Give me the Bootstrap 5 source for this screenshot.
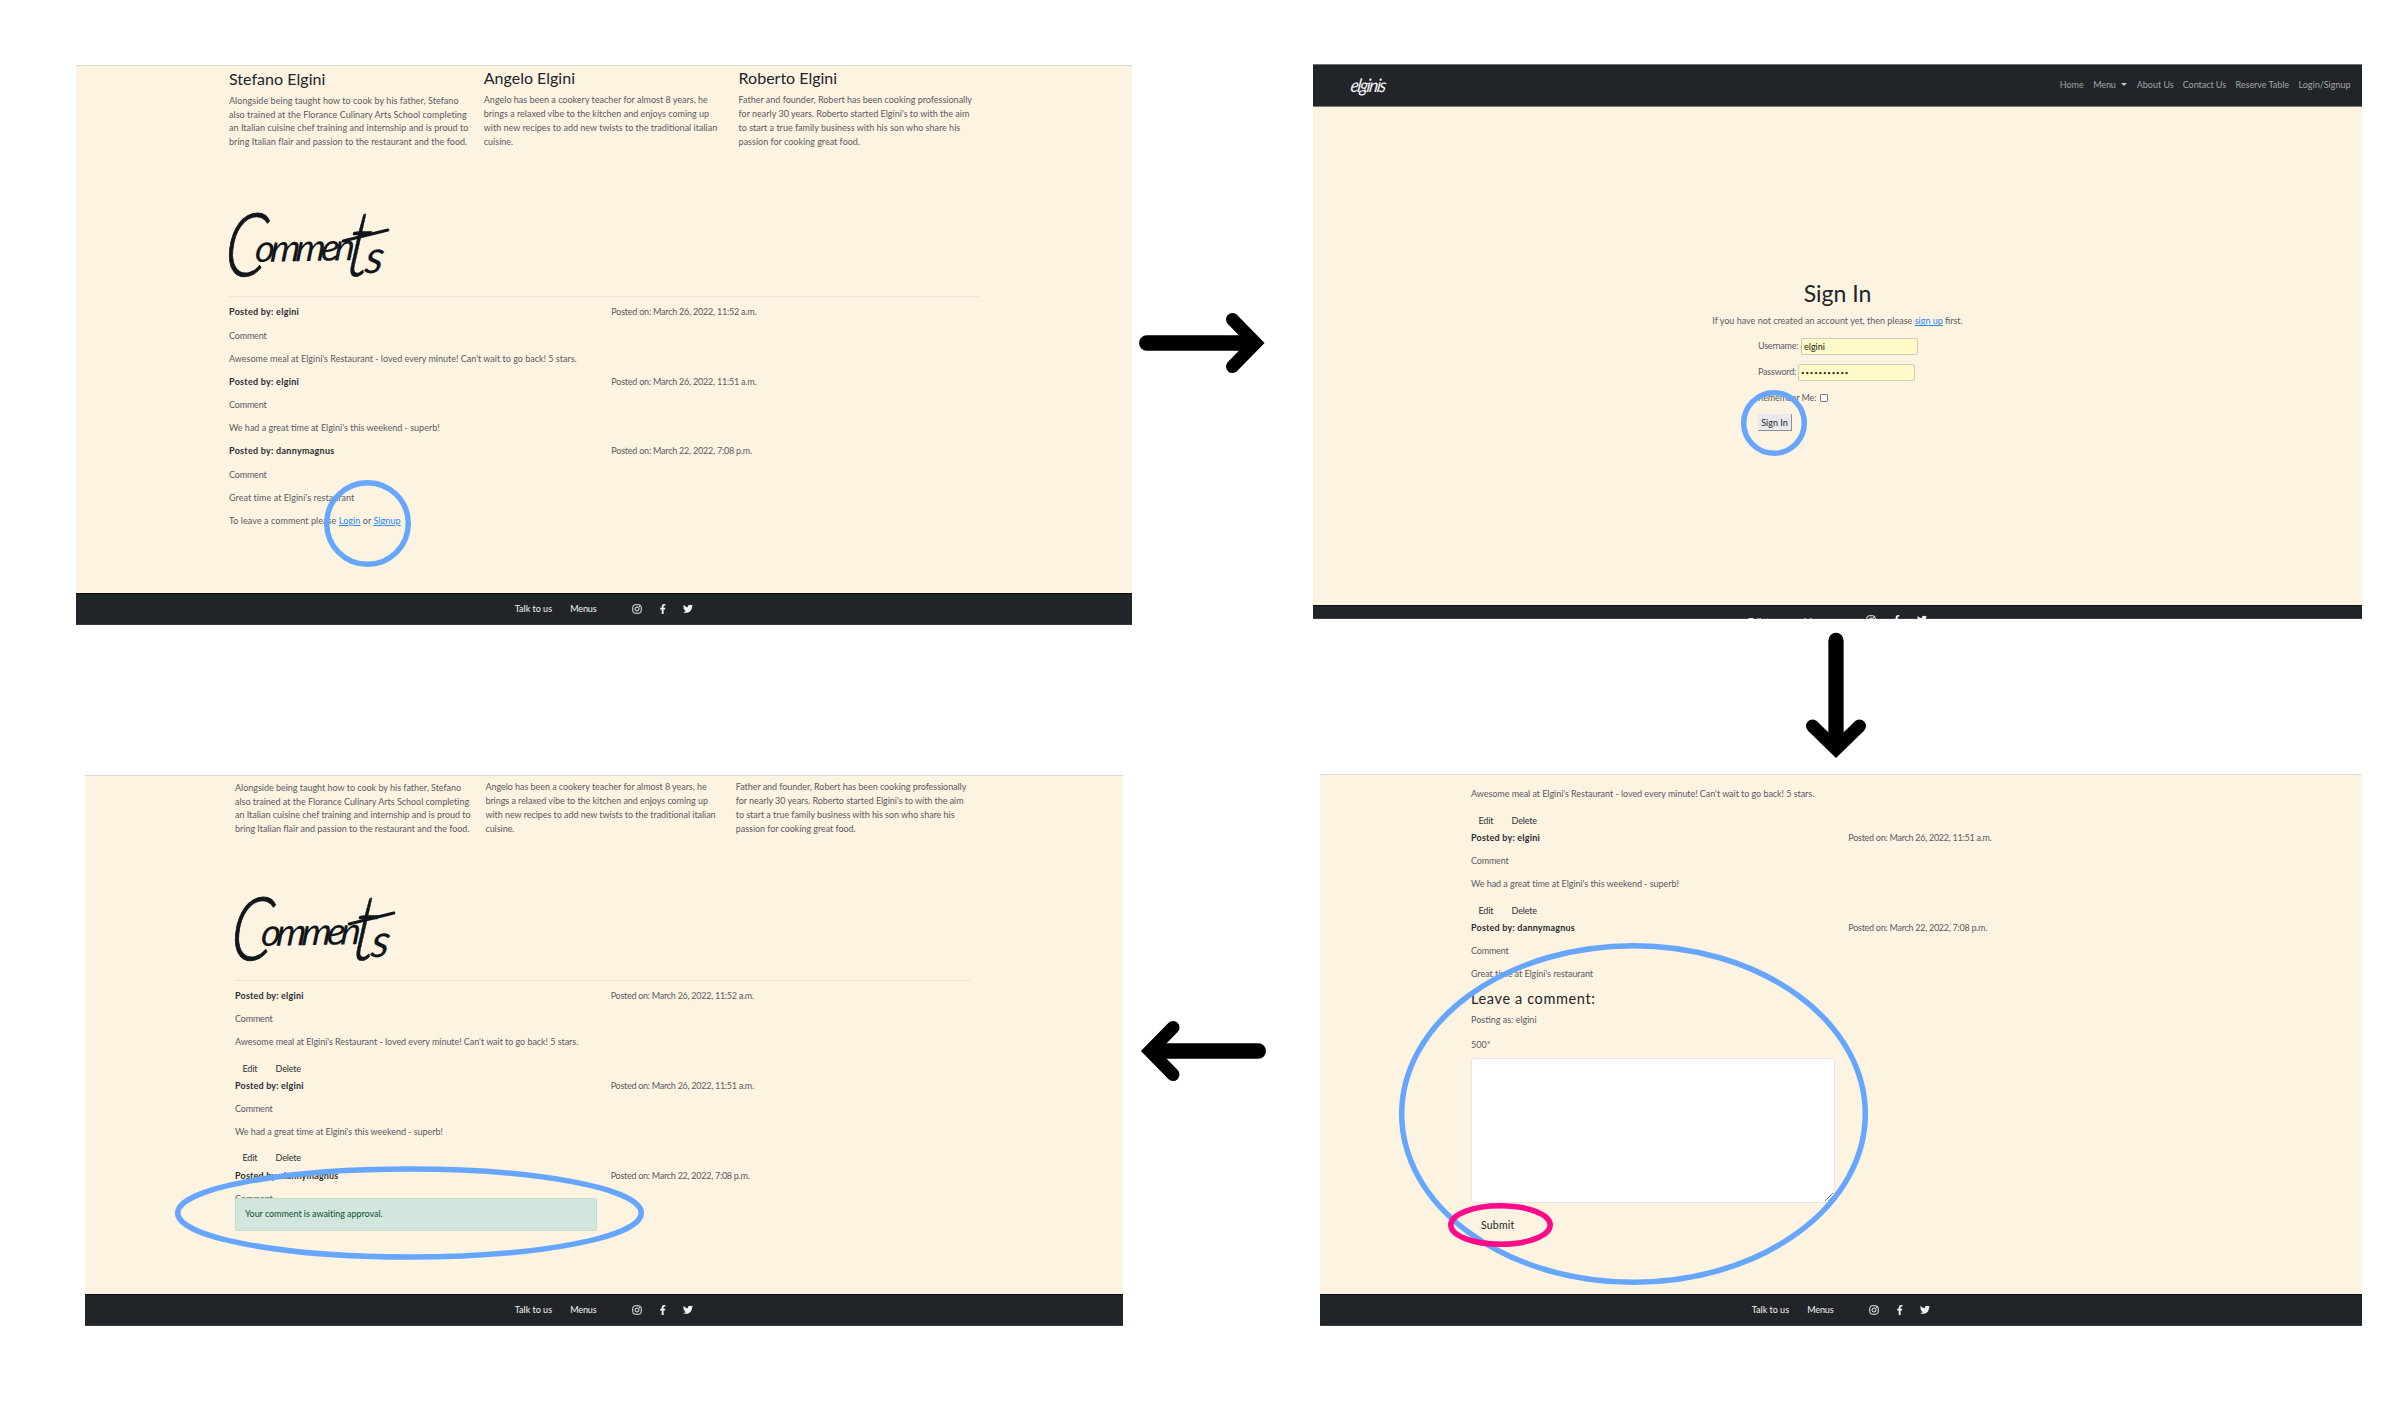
<!DOCTYPE html>
<html lang="en">
<head>
<meta charset="utf-8">
<title>Elgini's - comment flow</title>
<link href="https://cdn.jsdelivr.net/npm/bootstrap@5.3.0/dist/css/bootstrap.min.css" rel="stylesheet">
<style>
body{width:2400px;height:1409px;overflow:hidden;background:#fff;font-family:Lato,"Liberation Sans",sans-serif;font-size:9px;line-height:var(--lh);color:#5a5c5f;--lh:13.9px;--gap:9.25px}
.stage{width:2400px;height:1409px}
.panel{background:#fcf3e1;overflow:hidden}
.panel.cut{border-top:1px solid #dadbd6}
.panel p{margin:0 0 var(--gap)}
.panel b{font-weight:700;color:#2b2e32}
.p1{width:1056px;height:560px;margin:1.4px 0 0 76px}
.p2{width:1049px;height:555px}
.p3{width:1038px;height:550.6px;margin:1.2px 0 0 85px;--lh:13.65px;--gap:9.1px}
.p4{width:1042px;height:552px;--lh:13.65px;--gap:9.15px}
.row-top{height:625px;padding-top:64px}
.row-mid{height:149px;padding-left:1801px;padding-top:4px}
.arrow{width:137px;height:70px;flex:none}
.arrow-v{width:70px;height:137px}
.in1{margin-left:153px;width:750px;padding-top:2px}
.in3{margin-left:150px;width:736px;padding-top:3.8px}
.in4{margin-left:151px;width:600px;padding-top:12.2px}
.chef{width:254.8px;flex:none;white-space:nowrap;letter-spacing:0}
.chef h5{font-size:16px;line-height:19.2px;margin:0 0 5.4px;font-weight:400;color:#212529}
.p3 .chef{width:250.4px;letter-spacing:-.05px}
.first{padding-top:.7px;letter-spacing:.04px}
.p3 .first{letter-spacing:-.02px}
/* hand-lettered section heading */
.script-h{height:147px;color:#11161b;font-style:italic;font-weight:400;font-size:38px;line-height:38px;margin:0 0 0 -7px;padding-bottom:10px}
.p3 .script-h{height:143.5px}
.script-h span{display:inline-block;transform-origin:0 100%}
.script-h .s-c{font-size:88px;line-height:88px;font-weight:300;transform:scaleX(.74) skewX(-8deg);width:32px;-webkit-text-stroke:1px #11161b}
.script-h .s-m{letter-spacing:-4.6px;transform:translateY(-20px) skewX(-6deg) rotate(-1deg);width:89px}
.script-h .s-t{font-size:92px;line-height:92px;font-weight:300;transform:translateY(1px) scaleX(.75) skewX(-10deg);width:20px;-webkit-text-stroke:.6px #11161b}
.script-h .s-s{font-size:46px;line-height:46px;transform:translateY(-7px) skewX(-8deg)}
.script-h::after{content:"";position:absolute;left:119px;bottom:60px;width:49px;height:2.6px;border-radius:2px;background:#11161b;transform:rotate(-14deg)}
.rule{height:1px;background:#ece5d5;margin-bottom:8.2px}
.by{width:382.3px;flex:none;letter-spacing:.27px}
.p3 .by{width:375.7px;letter-spacing:.18px}
.p4 .by{width:377.3px;letter-spacing:.2px}
.on{letter-spacing:-.22px}
.p3 .on,.p4 .on{letter-spacing:-.27px}
.p3 .long,.p4 .long{letter-spacing:-.05px}
.word{letter-spacing:-.18px}
.acts{height:20.8px;padding:3.6px 0 0 7.5px;color:#2f3236;letter-spacing:-.15px}
.acts span:first-child{width:33px;display:inline-block}
.panel a{color:#2b86f5;text-decoration:underline}
.foot{height:32px;background:#212529;color:#f4f4f4;border-top:1px solid #0d1013;border-bottom:1px solid #3a3e42;flex:none}
.foot svg{height:10px;display:block;fill:#f4f4f4}
.f-talk{width:55.5px}.f-menu{width:62px;letter-spacing:-.15px}.f-in{width:28px}.f-fb{width:23px}
.p2 .foot{height:14px;padding-top:9px}
.topnav{height:43px;background:#212529;border-top:1px solid #6d7677;border-bottom:1px solid #7d7c78;padding:0 11.5px 2px 38px;color:#a2a4a5;flex:none}
.topnav .brand-s{color:#f5f5f5;font-style:italic;font-size:17px;line-height:20px;letter-spacing:-1.4px;font-weight:400;transform:skewX(-8deg) scaleY(1.1);display:inline-block}
.caret{border:3px solid transparent;border-top-color:#c8c9ca;border-bottom:0;margin-left:5.5px}
.signin{padding-top:173px}
.signin h2{font-size:23px;line-height:27.6px;font-weight:400;color:#212529;margin:0 0 6.8px;text-align:center}
.fields{margin-left:445px}
.fld{height:17.5px;margin-bottom:8.5px}
.fbox{width:117px;height:17.5px;background:#fffac8;border:1px solid #cfcbb9;border-radius:2px;padding-left:2px;line-height:15px;color:#222}
.dots{font-size:6px;letter-spacing:.9px}
.chk{width:8px;height:8px;background:#fff;border:1px solid #7b7b8b;border-radius:1px}
.signbtn{width:34px;height:17px;background:#e9e9ed;border:0;border-right:1px solid #8f8f9d;border-bottom:1px solid #8f8f9d;color:#222;font-size:9px;line-height:15px;padding:0;text-align:center}
.note{left:150px;top:421.4px;width:362px;height:33px;background:#d1e7dd;border:1px solid #c3dfd0;border-radius:2px;color:#0f5132;padding:8.8px 0 0 9px;letter-spacing:-.05px}
.leave{font-size:14.5px;line-height:17.4px;color:#212529;letter-spacing:.62px;margin:1px 0 5.6px;font-weight:400}
.area{width:364px;height:144.5px;background:#fff;border:1px solid #e3e5e6;border-radius:3px;margin-top:6px}
.area svg{right:0;bottom:0;width:10px;height:10px}
.sub{font-size:10.5px;color:#212529;letter-spacing:.2px;padding:16.5px 0 0 10px}
.marks{left:0;top:0;pointer-events:none}
</style>
<script src="https://cdn.jsdelivr.net/npm/bootstrap@5.3.0/dist/js/bootstrap.bundle.min.js"></script>
</head>
<body>
<svg width="0" height="0" class="position-absolute">
  <symbol id="ig" viewBox="0 0 20 20"><rect x="1.5" y="1.5" width="17" height="17" rx="5" fill="none" stroke="#f4f4f4" stroke-width="2"/><circle cx="10" cy="10" r="4" fill="none" stroke="#f4f4f4" stroke-width="2"/><circle cx="15" cy="5" r="1.3"/></symbol>
  <symbol id="fb" viewBox="0 0 12 20"><path d="M3.4 20V11.2H.4V7.7h3V5C3.400 1.800 5.300 0 8.100 0c1.400 0 2.700.2 2.700.2v3H9.200C7.700 3.200 7.200 4.100 7.200 5.100v2.600h3.400l-.6 3.500H7.200V20z"/></symbol>
  <symbol id="tw" viewBox="0 0 20 18"><path d="M18 4.500v.5c0 5.400-4.100 11.600-11.700 11.600-2.300 0-4.500-.7-6.300-1.800 2.200.2 4.300-.4 6-1.700-1.800 0-3.300-1.200-3.800-2.900.6.1 1.200.1 1.800-.1C2.100 9.700.7 8 .7 6c.6.3 1.200.5 1.900.5C.8 5.300.2 2.900 1.300 1c2 2.500 5 4.100 8.500 4.300C9.200 2.600 11.200.3 13.800.3c1.200 0 2.300.5 3 1.300.9-.2 1.800-.5 2.600-1-.3 1-1 1.800-1.800 2.300.8-.1 1.600-.3 2.400-.7-.6.9-1.200 1.600-2 2.300z"/></symbol>
</svg>
<div class="stage position-relative d-flex flex-column">
  <div class="row-top d-flex align-items-start">
    <section class="panel cut p1 d-flex flex-column">
      <div class="in1">
        <div class="d-flex">
          <div class="chef first"><h5>Stefano Elgini</h5>Alongside being taught how to cook by his father, Stefano<br>also trained at the Florance Culinary Arts School completing<br>an Italian cuisine chef training and internship and is proud to<br>bring Italian flair and passion to the restaurant and the food.</div>
          <div class="chef"><h5>Angelo Elgini</h5>Angelo has been a cookery teacher for almost 8 years, he<br>brings a relaxed vibe to the kitchen and enjoys coming up<br>with new recipes to add new twists to the traditional italian<br>cuisine.</div>
          <div class="chef"><h5>Roberto Elgini</h5>Father and founder, Robert has been cooking professionally<br>for nearly 30 years. Roberto started Elgini's to with the aim<br>to start a true family business with his son who share his<br>passion for cooking great food.</div>
        </div>
        <h1 class="script-h d-flex align-items-end position-relative"><span class="s-c">C</span><span class="s-m">ommen</span><span class="s-t">t</span><span class="s-s">s</span></h1>
        <div class="rule"></div>
        <p class="d-flex"><b class="by">Posted by: elgini</b><span class="on">Posted on: March 26, 2022, 11:52 a.m.</span></p>
        <p class="word">Comment</p>
        <p>Awesome meal at Elgini's Restaurant - loved every minute! Can't wait to go back! 5 stars.</p>
        <p class="d-flex"><b class="by">Posted by: elgini</b><span class="on">Posted on: March 26, 2022, 11:51 a.m.</span></p>
        <p class="word">Comment</p>
        <p>We had a great time at Elgini's this weekend - superb!</p>
        <p class="d-flex"><b class="by">Posted by: dannymagnus</b><span class="on">Posted on: March 22, 2022, 7:08 p.m.</span></p>
        <p class="word">Comment</p>
        <p style="letter-spacing:.05px">Great time at Elgini's restaurant</p>
        <p style="letter-spacing:.07px">To leave a comment please <a href="#">Login</a> or <a href="#">Signup</a></p>
      </div>
      <div class="foot mt-auto d-flex align-items-center justify-content-center"><span class="f-talk">Talk to us</span><span class="f-menu">Menus</span><span class="f-in"><svg width="10"><use href="#ig"/></svg></span><span class="f-fb"><svg width="6"><use href="#fb"/></svg></span><svg width="10"><use href="#tw"/></svg></div>
    </section>
    <svg class="arrow" style="margin:244px 40px 0 4px" viewBox="0 0 137 70" fill="none" stroke="#000" stroke-linecap="round"><path d="M10.700 35H112" stroke-width="15.300"/><path d="M96.500 11.500L119.500 35L96.500 58.500" stroke-width="13"/></svg>
    <section class="panel p2 d-flex flex-column">
      <nav class="topnav d-flex align-items-center">
        <span class="brand-s">elginis</span>
        <span class="ms-auto">Home</span><span style="margin-left:9.500px;letter-spacing:-.15px">Menu</span><i class="caret"></i><span style="margin-left:9.500px">About Us</span><span style="margin-left:9px;letter-spacing:-.05px">Contact Us</span><span style="margin-left:9.500px;letter-spacing:-.05px">Reserve Table</span><span style="margin-left:9.500px">Login/Signup</span>
      </nav>
      <div class="signin">
        <h2>Sign In</h2>
        <p class="text-center">If you have not created an account yet, then please <a href="#">sign up</a> first.</p>
        <div class="fields">
          <div class="fld d-flex align-items-center"><span style="width:43px;letter-spacing:-.22px">Username:</span><span class="fbox">elgini</span></div>
          <div class="fld d-flex align-items-center"><span style="width:40px;letter-spacing:-.22px">Password:</span><span class="fbox dots">•••••••••••</span></div>
          <div class="fld d-flex align-items-center" style="margin-bottom:7px"><span style="width:62px;letter-spacing:-.15px">Remember Me:</span><span class="chk"></span></div>
          <button class="signbtn">Sign In</button>
        </div>
      </div>
      <div class="foot mt-auto d-flex justify-content-center"><span class="f-talk">Talk to us</span><span class="f-menu">Menus</span><span class="f-in"><svg width="10"><use href="#ig"/></svg></span><span class="f-fb"><svg width="6"><use href="#fb"/></svg></span><svg width="10"><use href="#tw"/></svg></div>
    </section>
  </div>
  <div class="row-mid"><svg class="arrow-v" viewBox="0 0 70 137" fill="none" stroke="#000" stroke-linecap="round"><path d="M35 11.500V113" stroke-width="15.300"/><path d="M11.500 97L35 120L58.500 97" stroke-width="13"/></svg></div>
  <div class="d-flex align-items-start">
    <section class="panel cut p3 d-flex flex-column position-relative">
      <div class="in3">
        <div class="d-flex">
          <div class="chef first">Alongside being taught how to cook by his father, Stefano<br>also trained at the Florance Culinary Arts School completing<br>an Italian cuisine chef training and internship and is proud to<br>bring Italian flair and passion to the restaurant and the food.</div>
          <div class="chef">Angelo has been a cookery teacher for almost 8 years, he<br>brings a relaxed vibe to the kitchen and enjoys coming up<br>with new recipes to add new twists to the traditional italian<br>cuisine.</div>
          <div class="chef">Father and founder, Robert has been cooking professionally<br>for nearly 30 years. Roberto started Elgini's to with the aim<br>to start a true family business with his son who share his<br>passion for cooking great food.</div>
        </div>
        <h1 class="script-h d-flex align-items-end position-relative"><span class="s-c">C</span><span class="s-m">ommen</span><span class="s-t">t</span><span class="s-s">s</span></h1>
        <div class="rule"></div>
        <p class="d-flex"><b class="by">Posted by: elgini</b><span class="on">Posted on: March 26, 2022, 11:52 a.m.</span></p>
        <p class="word">Comment</p>
        <p class="long">Awesome meal at Elgini's Restaurant - loved every minute! Can't wait to go back! 5 stars.</p>
        <div class="acts"><span>Edit</span><span>Delete</span></div>
        <p class="d-flex"><b class="by">Posted by: elgini</b><span class="on">Posted on: March 26, 2022, 11:51 a.m.</span></p>
        <p class="word">Comment</p>
        <p class="long">We had a great time at Elgini's this weekend - superb!</p>
        <div class="acts"><span>Edit</span><span>Delete</span></div>
        <p class="d-flex"><b class="by">Posted by: dannymagnus</b><span class="on">Posted on: March 22, 2022, 7:08 p.m.</span></p>
        <p class="word">Comment</p>
      </div>
      <div class="note position-absolute">Your comment is awaiting approval.</div>
      <div class="foot mt-auto d-flex align-items-center justify-content-center"><span class="f-talk">Talk to us</span><span class="f-menu">Menus</span><span class="f-in"><svg width="10"><use href="#ig"/></svg></span><span class="f-fb"><svg width="6"><use href="#fb"/></svg></span><svg width="10"><use href="#tw"/></svg></div>
    </section>
    <svg class="arrow" style="margin:241.500px 43.500px 0 16.500px" viewBox="0 0 137 70" fill="none" stroke="#000" stroke-linecap="round"><path d="M118.300 35H18" stroke-width="15.300"/><path d="M33 11.500L10 35L33 58.500" stroke-width="13"/></svg>
    <section class="panel cut p4 d-flex flex-column">
      <div class="in4">
        <p class="long">Awesome meal at Elgini's Restaurant - loved every minute! Can't wait to go back! 5 stars.</p>
        <div class="acts"><span>Edit</span><span>Delete</span></div>
        <p class="d-flex"><b class="by">Posted by: elgini</b><span class="on">Posted on: March 26, 2022, 11:51 a.m.</span></p>
        <p class="word">Comment</p>
        <p class="long">We had a great time at Elgini's this weekend - superb!</p>
        <div class="acts"><span>Edit</span><span>Delete</span></div>
        <p class="d-flex"><b class="by">Posted by: dannymagnus</b><span class="on">Posted on: March 22, 2022, 7:08 p.m.</span></p>
        <p class="word">Comment</p>
        <p class="long">Great time at Elgini's restaurant</p>
        <h3 class="leave">Leave a comment:</h3>
        <div style="margin-bottom:11.300px">Posting as: elgini</div>
        <div>500*</div>
        <div class="area position-relative"><svg class="position-absolute" viewBox="0 0 10 10" stroke="#555" stroke-width=".8"><path d="M1 9L9 1M4.500 9L9 4.500"/></svg></div>
        <div class="sub">Submit</div>
      </div>
      <div class="foot mt-auto d-flex align-items-center justify-content-center"><span class="f-talk">Talk to us</span><span class="f-menu">Menus</span><span class="f-in"><svg width="10"><use href="#ig"/></svg></span><span class="f-fb"><svg width="6"><use href="#fb"/></svg></span><svg width="10"><use href="#tw"/></svg></div>
    </section>
  </div>
  <svg class="marks position-absolute" width="2400" height="1409" fill="none" stroke="#66a6ff" stroke-width="5.500">
    <ellipse cx="367.500" cy="523.500" rx="40.800" ry="40.800"/>
    <ellipse cx="1774" cy="423" rx="30.300" ry="30.300"/>
    <ellipse cx="409.500" cy="1213" rx="231.800" ry="44"/>
    <ellipse cx="1633.500" cy="1114" rx="231.800" ry="168.300"/>
    <ellipse cx="1500.500" cy="1225" rx="49.700" ry="19.300" stroke="#ff0a88"/>
  </svg>
</div>
</body>
</html>
